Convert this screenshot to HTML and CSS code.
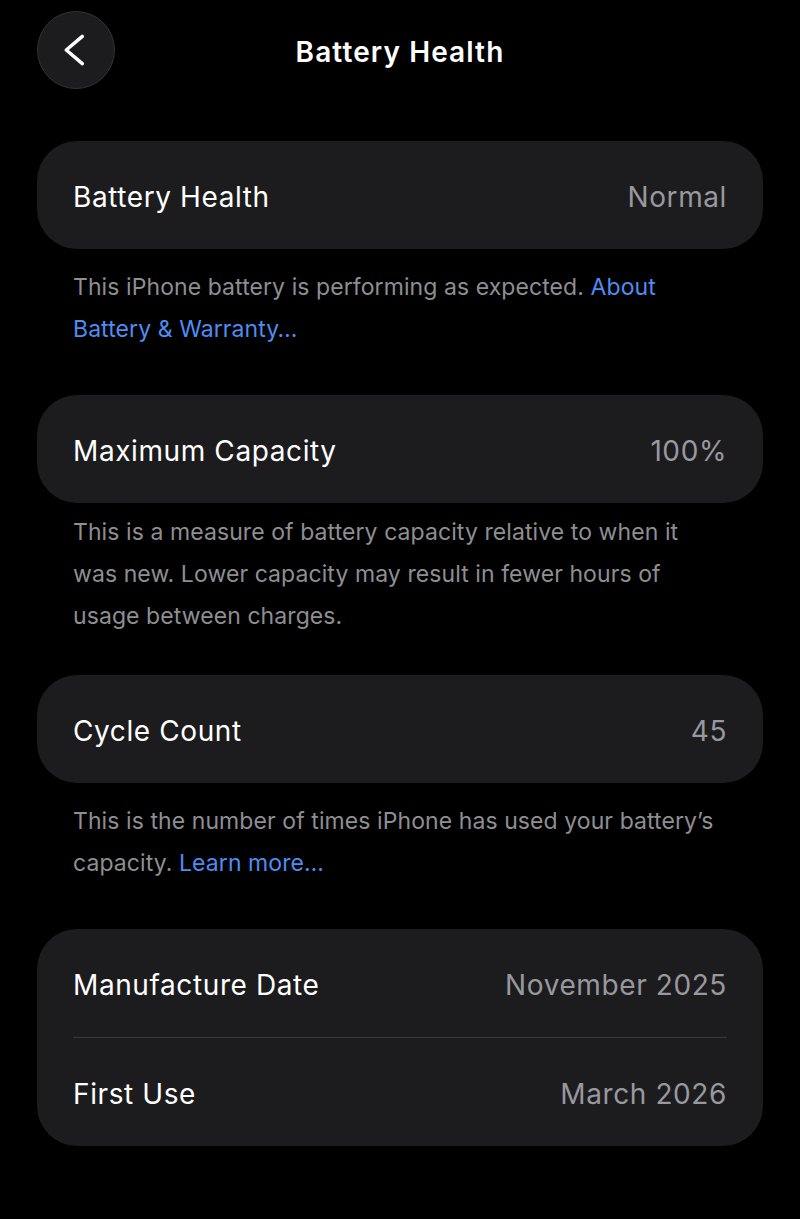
FILE: index.html
```html
<!DOCTYPE html>
<html>
<head>
<meta charset="utf-8">
<link rel="stylesheet" href="styles.css">
</head>
<body>
<div class="page">
  <header class="nav">
    <div class="back">
      <svg width="78" height="78" viewBox="0 0 78 78"><path d="M45.5 25 L29 39 L45.5 53" fill="none" stroke="#ffffff" stroke-width="3.6" stroke-linecap="round" stroke-linejoin="round"/></svg>
    </div>
    <div class="title">Battery Health</div>
  </header>

  <section class="card">
    <div class="row"><span class="label">Battery Health</span><span class="value">Normal</span></div>
  </section>
  <p class="note">This iPhone battery is performing as expected. <a class="link">About Battery &amp; Warranty…</a></p>

  <section class="card">
    <div class="row"><span class="label">Maximum Capacity</span><span class="value">100%</span></div>
  </section>
  <p class="note note-tight">This is a measure of battery capacity relative to when it was new. Lower capacity may result in fewer hours of usage between charges.</p>

  <section class="card">
    <div class="row"><span class="label">Cycle Count</span><span class="value">45</span></div>
  </section>
  <p class="note">This is the number of times iPhone has used your battery’s capacity. <a class="link">Learn more…</a></p>

  <section class="card">
    <div class="row"><span class="label">Manufacture Date</span><span class="value">November 2025</span></div>
    <div class="sep"></div>
    <div class="row"><span class="label">First Use</span><span class="value">March 2026</span></div>
  </section>
</div>
</body>
</html>
```

FILE: styles.css
```css
html, body {
  margin: 0;
  padding: 0;
  background: #000000;
}
body {
  font-family: Inter, "Noto Sans", sans-serif;
  color: #ffffff;
}
.page {
  padding: 0 37px;
}
.nav {
  position: relative;
  height: 141px;
}
.back {
  position: absolute;
  left: 0;
  top: 11px;
  width: 78px;
  height: 78px;
  box-sizing: border-box;
  border-radius: 50%;
  background: #1c1c1e;
  border: 1px solid #343436;
  display: flex;
  align-items: center;
  justify-content: center;
}
.back svg {
  display: block;
}
.title {
  position: absolute;
  left: 0;
  right: 0;
  top: 32px;
  text-align: center;
  font-size: 28px;
  font-weight: 600;
  line-height: 40px;
  letter-spacing: 1.1px;
}
.card {
  background: #1c1c1e;
  border-radius: 40px;
  padding: 0 36px;
}
.row {
  height: 108px;
  box-sizing: border-box;
  padding-top: 3px;
  display: flex;
  align-items: center;
  justify-content: space-between;
  font-size: 28px;
  letter-spacing: 0.6px;
}
.label {
  color: #ffffff;
}
.value {
  color: #98989e;
}
.sep {
  height: 1px;
  background: #3a3a3c;
}
.note {
  margin: 0;
  padding: 17px 36px 45px;
  font-size: 23px;
  line-height: 42px;
  color: #8e8e93;
  letter-spacing: 0.08px;
}
.note-tight {
  padding-top: 8px;
  padding-bottom: 38px;
}
.link {
  color: #4e8df2;
  text-decoration: none;
}
```
